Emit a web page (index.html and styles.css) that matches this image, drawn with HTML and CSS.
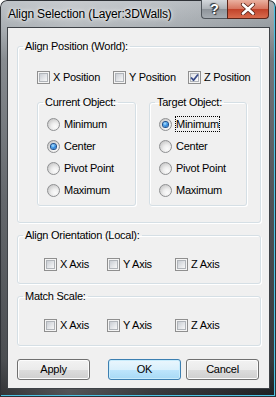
FILE: index.html
```
<!DOCTYPE html>
<html>
<head>
<meta charset="utf-8">
<link rel="stylesheet" href="styles.css">
</head>
<body>
<div class="window">
  <div class="titlebar">
    <span class="title">Align Selection (Layer:3DWalls)</span>
    <div class="caption-btns">
      <div class="cbtn help">?</div>
      <div class="cbtn close">
        <svg width="16" height="12" viewBox="0 0 16 12">
          <path d="M3 1.5 L13 10.5 M13 1.5 L3 10.5" stroke="#5a2418" stroke-width="4.2" stroke-linecap="round" fill="none"/>
          <path d="M3 1.5 L13 10.5 M13 1.5 L3 10.5" stroke="#ffffff" stroke-width="2.6" stroke-linecap="round" fill="none"/>
        </svg>
      </div>
    </div>
  </div>
  <div class="client">
    <fieldset class="group g1">
      <legend>Align Position (World):</legend>
      <div class="checks pos">
        <label class="chk"><span class="box"></span><span class="lbl">X Position</span></label>
        <label class="chk"><span class="box"></span><span class="lbl">Y Position</span></label>
        <label class="chk"><span class="box checked"><svg width="11" height="11" viewBox="0 0 11 11"><path d="M2 5.5 L4.5 8.2 L9 2.5" stroke="#3b4d8a" stroke-width="1.8" fill="none" stroke-linejoin="round"/></svg></span><span class="lbl">Z Position</span></label>
      </div>
      <div class="subgroups">
        <fieldset class="group sub cur">
          <legend>Current Object:</legend>
          <div class="rows">
            <div class="radio"><span class="rb"></span><span class="lbl">Minimum</span></div>
            <div class="radio"><span class="rb on"></span><span class="lbl">Center</span></div>
            <div class="radio"><span class="rb"></span><span class="lbl">Pivot Point</span></div>
            <div class="radio"><span class="rb"></span><span class="lbl">Maximum</span></div>
          </div>
        </fieldset>
        <fieldset class="group sub tgt">
          <legend>Target Object:</legend>
          <div class="rows">
            <div class="radio"><span class="rb on"></span><span class="lbl focus">Minimum</span></div>
            <div class="radio"><span class="rb"></span><span class="lbl">Center</span></div>
            <div class="radio"><span class="rb"></span><span class="lbl">Pivot Point</span></div>
            <div class="radio"><span class="rb"></span><span class="lbl">Maximum</span></div>
          </div>
        </fieldset>
      </div>
    </fieldset>

    <fieldset class="group g2">
      <legend>Align Orientation (Local):</legend>
      <div class="checks axes">
        <label class="chk"><span class="box"></span><span class="lbl">X Axis</span></label>
        <label class="chk"><span class="box"></span><span class="lbl">Y Axis</span></label>
        <label class="chk"><span class="box"></span><span class="lbl">Z Axis</span></label>
      </div>
    </fieldset>

    <fieldset class="group g3">
      <legend>Match Scale:</legend>
      <div class="checks axes">
        <label class="chk"><span class="box"></span><span class="lbl">X Axis</span></label>
        <label class="chk"><span class="box"></span><span class="lbl">Y Axis</span></label>
        <label class="chk"><span class="box"></span><span class="lbl">Z Axis</span></label>
      </div>
    </fieldset>

    <div class="buttons">
      <div class="btn apply">Apply</div>
      <div class="btn ok">OK</div>
      <div class="btn cancel">Cancel</div>
    </div>
  </div>
</div>
</body>
</html>
```
FILE: styles.css
```
html, body {
  margin: 0;
  padding: 0;
  background: #ffffff;
}
body {
  font-family: "Liberation Sans", Arial, sans-serif;
  font-size: 11px;
  letter-spacing: -0.25px;
  color: #000;
}
.window {
  width: 276px;
  height: 397px;
  box-sizing: border-box;
  display: flex;
  flex-direction: column;
  border-radius: 7px 7px 0 0;
  background:
    linear-gradient(to right, rgba(255,255,255,0.08) 0%, rgba(255,255,255,0.22) 25%, rgba(255,255,255,0.1) 55%, rgba(0,0,0,0.08) 100%),
    linear-gradient(to bottom, #b9bec3 0px, #a3a9ae 27px, #7c8186 60px, #55595e 200px, #3a3d41 360px, #1f2124 397px);
  box-shadow: inset 0 0 0 1px #2e3136, inset -2px -2px 0 #4cc3e3;
  overflow: hidden;
}
.titlebar {
  height: 27px;
  display: flex;
  justify-content: space-between;
  align-items: flex-start;
  flex: none;
}
.title {
  font-size: 12px;
  letter-spacing: -0.15px;
  line-height: 15px;
  padding: 7px 0 0 8px;
  text-shadow: 0 0 6px rgba(255,255,255,0.95), 0 0 3px rgba(255,255,255,0.9);
  white-space: nowrap;
}
.caption-btns {
  display: flex;
  margin-right: 7px;
}
.cbtn {
  height: 19px;
  box-sizing: border-box;
  display: flex;
  align-items: center;
  justify-content: center;
}
.help {
  width: 26px;
  border: 1px solid #50565c;
  border-top: none;
  border-right: none;
  border-radius: 0 0 0 4px;
  background: linear-gradient(#d4d8dc 0%, #aeb3b8 48%, #8e949a 52%, #a6acb2 100%);
  color: #fff;
  font-weight: bold;
  font-size: 14px;
  letter-spacing: 0;
  text-shadow: 0 0 1px #303438, 1px 1px 1px #303438, -1px -1px 1px #303438;
  line-height: 18px;
}
.close {
  width: 42px;
  border: 1px solid #5b2519;
  border-top: none;
  border-radius: 0 0 4px 0;
  background: linear-gradient(#eab1a0 0%, #d77660 48%, #c2432a 52%, #d86b4d 100%);
}
.client {
  margin-left: 7px;
  width: 263px;
  height: 362px;
  box-sizing: border-box;
  border: 1px solid #3e4247;
  background: #f0f0f0;
  flex: none;
}
.group {
  margin: 0 0 0 9px;
  padding: 0;
  width: 244px;
  box-sizing: border-box;
  border: 1px solid #d5dfe5;
  border-radius: 3px;
  min-width: 0;
  box-shadow: 1px 1px 0 #ffffff inset, 1px 1px 0 #ffffff;
}
legend {
  padding: 0 2px;
  margin-left: 5px;
  line-height: 13px;
}
.g1 { margin-top: 12px; }
.g2, .g3 { margin-top: 6px; }
.checks {
  display: grid;
  height: 13px;
  align-items: center;
}
.pos {
  padding: 18px 0 0 19px;
  grid-template-columns: 76px 75px auto;
}
.axes {
  padding: 16px 0 12px 26px;
  grid-template-columns: 63px 68px auto;
}
.g3 .axes { padding-bottom: 13px; }
.chk {
  display: flex;
  align-items: center;
  line-height: 13px;
  white-space: nowrap;
}
.chk .lbl { margin-left: 3px; }
.box {
  width: 13px;
  height: 13px;
  box-sizing: border-box;
  border: 1px solid #8f8f8f;
  background: #f4f4f4;
  padding: 1px;
  display: flex;
  flex: none;
}
.box::before {
  content: "";
  display: block;
  width: 9px;
  height: 9px;
  box-sizing: border-box;
  border: 1px solid #b0b4b9;
  background: linear-gradient(135deg, #c9cdd3 0%, #e3e5e8 55%, #f7f7f7 100%);
}
.box.checked { position: relative; }
.box.checked::before {
  background: linear-gradient(135deg, #e2e4e8 0%, #f2f3f5 60%, #fbfbfb 100%);
}
.box.checked svg {
  position: absolute;
  left: 0;
  top: 0;
}
.subgroups {
  display: flex;
  gap: 13px;
  margin: 12px 0 16px 19px;
}
.sub {
  margin: 0;
}
.cur { width: 99px; }
.tgt { width: 98px; }
.rows {
  padding: 4px 0 4px 9px;
}
.radio {
  height: 22px;
  display: flex;
  align-items: center;
  white-space: nowrap;
}
.radio .lbl { margin-left: 4px; line-height: 14px; }
.radio .lbl.focus {
  margin-left: 3px;
  border: 1px dotted #000;
}
.rb {
  width: 13px;
  height: 13px;
  box-sizing: border-box;
  border-radius: 50%;
  border: 1px solid #8f9092;
  background: radial-gradient(circle at 65% 70%, #fbfbfb 0%, #eeeeee 35%, #c9c9c9 80%, #bdbdbd 100%);
  display: flex;
  align-items: center;
  justify-content: center;
  flex: none;
}
.rb.on::after {
  content: "";
  width: 5px;
  height: 5px;
  border-radius: 50%;
  background: radial-gradient(circle at 40% 35%, #b6e6ff 0%, #3d97e8 45%, #0e4f9f 100%);
  box-shadow: 0 0 0 1px #1d4f8c;
}
.buttons {
  display: flex;
  margin-top: 13px;
}
.btn {
  width: 73px;
  height: 21px;
  box-sizing: border-box;
  border: 1px solid #707070;
  border-radius: 3px;
  background: linear-gradient(#f2f2f2 0%, #ebebeb 50%, #dddddd 50%, #cfcfcf 100%);
  box-shadow: inset 0 0 0 1px #fcfcfc;
  display: flex;
  align-items: center;
  justify-content: center;
  line-height: 13px;
}
.apply { margin-left: 9px; }
.ok {
  margin-left: 18px;
  border-color: #3c7fb1;
  background: linear-gradient(#eaf6fd 0%, #d9f0fc 50%, #bee6fd 50%, #a7d9f5 100%);
  box-shadow: inset 0 0 0 1px #c8ecfc;
}
.cancel { margin-left: 5px; }
```
